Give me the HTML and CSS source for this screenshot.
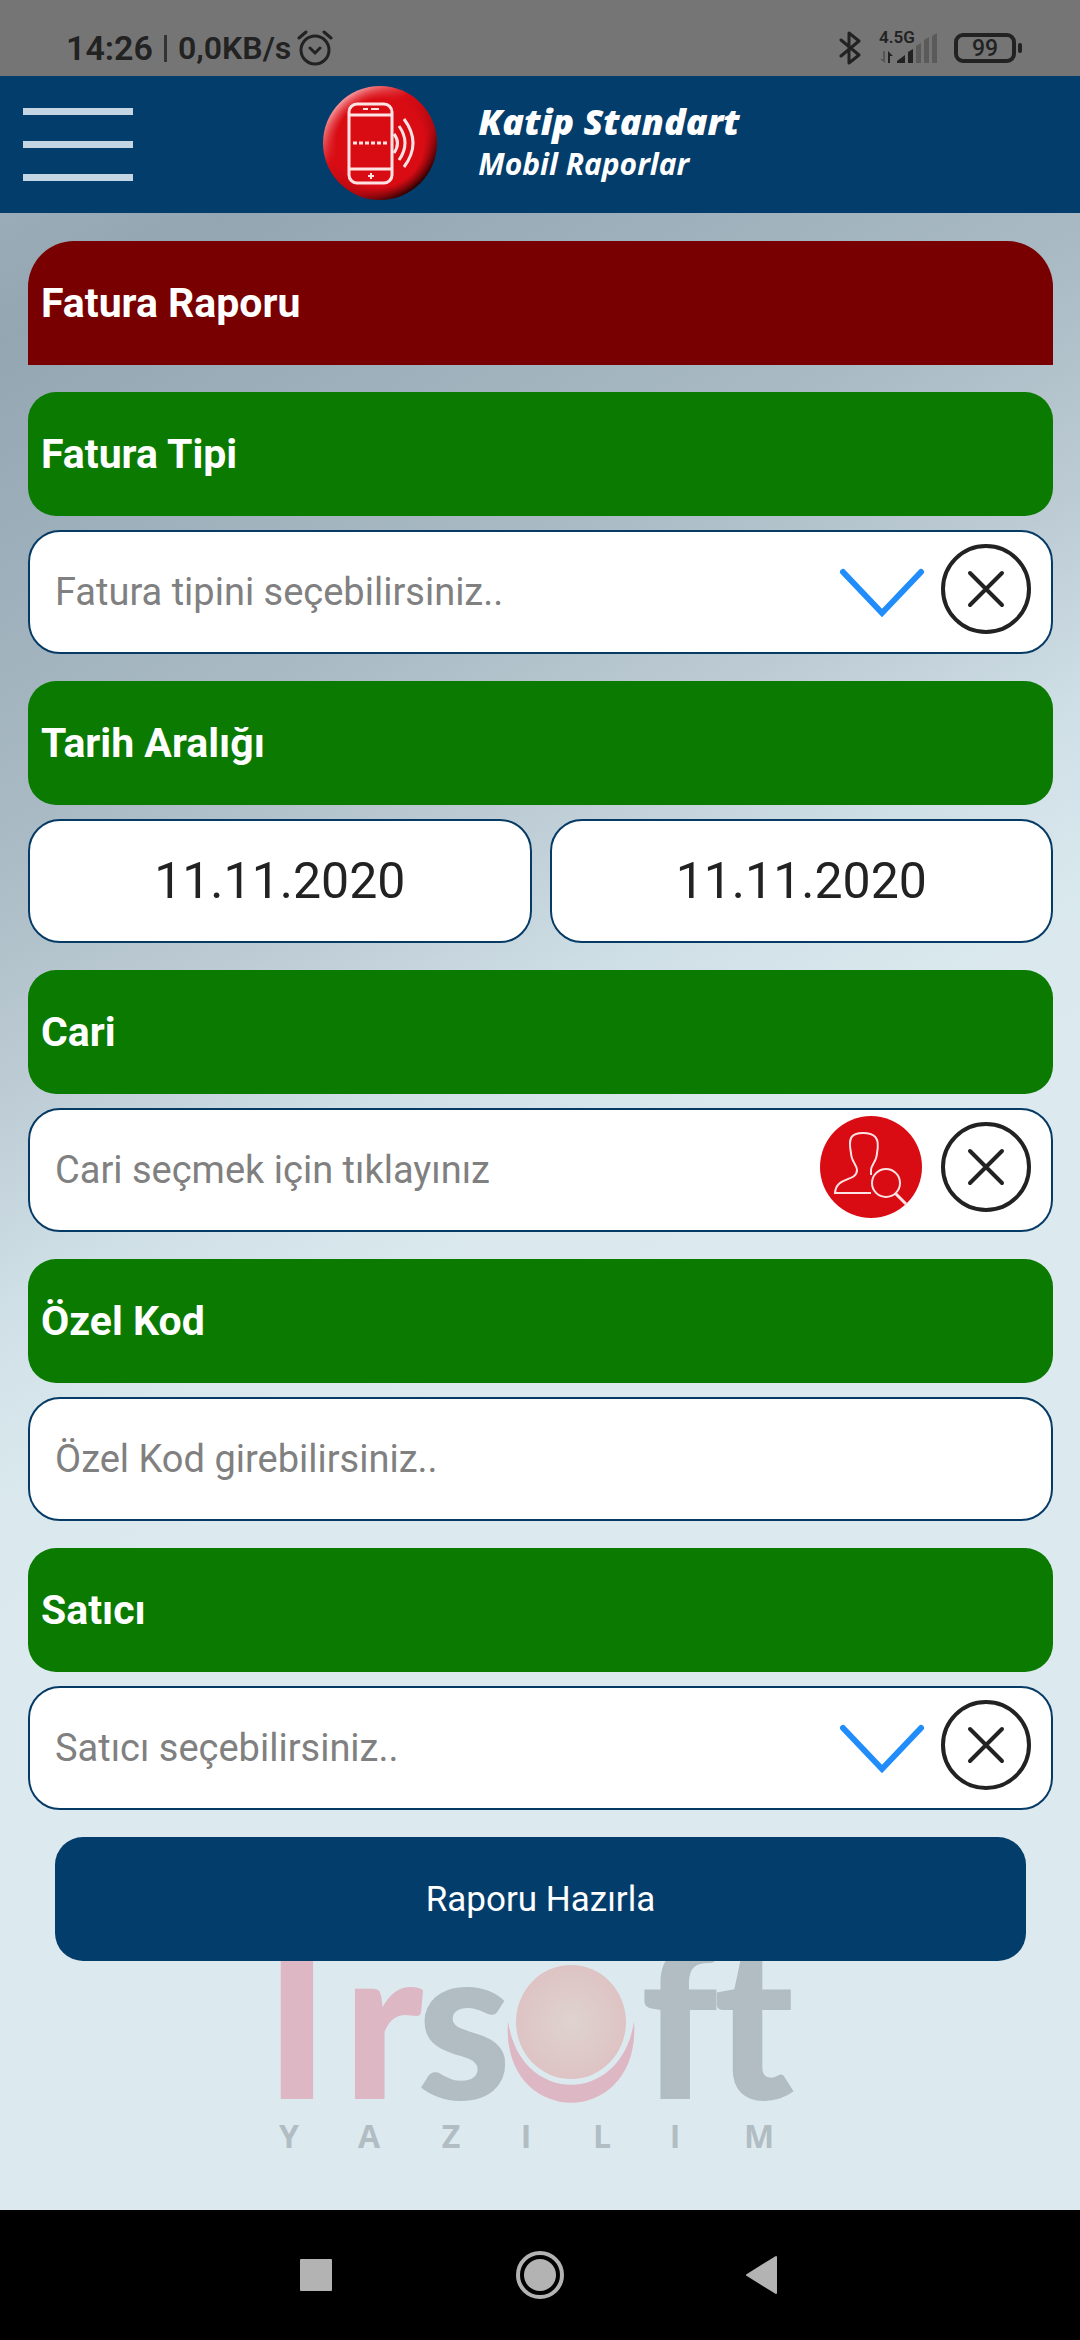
FILE: index.html
```
<!DOCTYPE html>
<html lang="tr">
<head>
  <meta charset="UTF-8">
  <meta name="viewport" content="width=device-width, initial-scale=1">
  <title>Katip Standart Mobil Raporlar</title>
  <link rel="stylesheet" href="styles.css">
</head>
<body>

<div class="status-bar">
  <div class="status-left">
    <span class="clock">14:26</span>
    <span class="divider"></span>
    <span class="speed">0,0KB/s</span>
    <svg class="alarm" viewBox="0 0 36 36" width="36" height="36" fill="none" stroke="#222" stroke-width="3" stroke-linecap="round">
      <circle cx="18" cy="20" r="14"/>
      <path d="M13 18l5 5 5-5M2 8l7-6M34 8l-7-6"/>
    </svg>
  </div>
  <div class="status-right">
    <svg viewBox="0 0 22 36" width="22" height="36" fill="none" stroke="#222" stroke-width="3" stroke-linejoin="round" stroke-linecap="round">
      <path d="M2 10l18 15-10 8V3l10 8L2 26"/>
    </svg>
    <div class="network">
      <span class="network-type">4.5G</span>
      <svg viewBox="0 0 60 32" width="60" height="32">
        <path d="M6 19v12l-5-4h3v-8z" fill="#555"/>
        <path d="M9 31V19l5 5h-3v7z" fill="#222"/>
        <path d="M18 31v-2l8-6v8zM29 31V20l5-3v14z" fill="#222"/>
        <path d="M37 31V14l5-3v20zM45 31V8l5-3v26zM53 31V4l5-3v30z" fill="#5a5a5a"/>
      </svg>
    </div>
    <div class="battery">99</div>
  </div>
</div>

<header class="top-bar">
  <button type="button" class="menu-button" aria-label="Menü">
    <span></span><span></span><span></span>
  </button>
  <div class="brand">
    <svg viewBox="0 0 116 116" width="116" height="116">
      <defs>
        <linearGradient id="rim" x1="0.15" y1="0.1" x2="0.85" y2="0.9">
          <stop offset="0" stop-color="#f7a0a4"/>
          <stop offset="0.35" stop-color="#d90c14"/>
          <stop offset="0.7" stop-color="#b00810"/>
          <stop offset="1" stop-color="#1c0000"/>
        </linearGradient>
        <radialGradient id="face">
          <stop offset="0.78" stop-color="#d90c14"/>
          <stop offset="1" stop-color="#d90c14" stop-opacity="0"/>
        </radialGradient>
      </defs>
      <circle cx="58" cy="58" r="57" fill="url(#rim)"/>
      <circle cx="58" cy="58" r="56" fill="url(#face)"/>
      <g fill="none" stroke="#ffe3e4" stroke-width="3">
        <rect x="27" y="19" width="43" height="79" rx="8"/>
        <path d="M27 30h43M27 84h43"/>
        <path d="M31 58h36" stroke-dasharray="4 2"/>
        <path d="M41 24h5M49 24h8M46 91h6M49 88v6" stroke-width="2"/>
        <path d="M72 49q7 9 0 19M77 41q12 17 0 34M82 34q18 24 0 48"/>
      </g>
    </svg>
    <div class="brand-text">
      <strong>Katip Standart</strong>
      <span>Mobil Raporlar</span>
    </div>
  </div>
</header>

<main>
  <form class="report-form">
    <h1>Fatura Raporu</h1>

    <div class="group">
      <label for="faturaTipi">Fatura Tipi</label>
      <div class="field">
        <input type="text" id="faturaTipi" placeholder="Fatura tipini seçebilirsiniz..">
        <div class="actions">
          <button type="button" class="icon-button" aria-label="Fatura tipi seç">
            <svg viewBox="0 0 100 100" width="100" height="100" fill="none" stroke="#218dfb" stroke-width="6" stroke-linecap="round">
              <path d="M13 33l39 41 39-41"/>
            </svg>
          </button>
          <button type="button" class="icon-button" aria-label="Temizle">
            <svg viewBox="0 0 100 100" width="100" height="100" fill="none" stroke="#222" stroke-width="4" stroke-linecap="round">
              <circle cx="50" cy="50" r="43"/>
              <path d="M34 34l32 32M66 34L34 66"/>
            </svg>
          </button>
        </div>
      </div>
    </div>

    <div class="group">
      <label for="tarihBas">Tarih Aralığı</label>
      <div class="dates">
        <div class="field"><input type="text" id="tarihBas" class="date" value="11.11.2020"></div>
        <div class="field"><input type="text" id="tarihBit" class="date" value="11.11.2020" aria-label="Bitiş tarihi"></div>
      </div>
    </div>

    <div class="group">
      <label for="cari">Cari</label>
      <div class="field">
        <input type="text" id="cari" placeholder="Cari seçmek için tıklayınız">
        <div class="actions">
          <button type="button" class="icon-button wide" aria-label="Cari ara">
            <svg viewBox="0 0 102 102" width="102" height="102" fill="none" stroke="#ffe3e4" stroke-width="2">
              <circle cx="51" cy="51" r="51" fill="#d90c14" stroke="none"/>
              <path d="M51 77H15C16 60 37 66 37 54C37 49 31 45 31 37C28 22 31 17 43 17S60 22 57 37C57 45 51 49 51 54V59"/>
              <circle cx="66" cy="67" r="14"/>
              <path d="M75 77l11 11" stroke-width="3"/>
            </svg>
          </button>
          <button type="button" class="icon-button" aria-label="Temizle">
            <svg viewBox="0 0 100 100" width="100" height="100" fill="none" stroke="#222" stroke-width="4" stroke-linecap="round">
              <circle cx="50" cy="50" r="43"/>
              <path d="M34 34l32 32M66 34L34 66"/>
            </svg>
          </button>
        </div>
      </div>
    </div>

    <div class="group">
      <label for="ozelKod">Özel Kod</label>
      <div class="field">
        <input type="text" id="ozelKod" placeholder="Özel Kod girebilirsiniz..">
      </div>
    </div>

    <div class="group">
      <label for="satici">Satıcı</label>
      <div class="field">
        <input type="text" id="satici" placeholder="Satıcı seçebilirsiniz..">
        <div class="actions">
          <button type="button" class="icon-button" aria-label="Satıcı seç">
            <svg viewBox="0 0 100 100" width="100" height="100" fill="none" stroke="#218dfb" stroke-width="6" stroke-linecap="round">
              <path d="M13 33l39 41 39-41"/>
            </svg>
          </button>
          <button type="button" class="icon-button" aria-label="Temizle">
            <svg viewBox="0 0 100 100" width="100" height="100" fill="none" stroke="#222" stroke-width="4" stroke-linecap="round">
              <circle cx="50" cy="50" r="43"/>
              <path d="M34 34l32 32M66 34L34 66"/>
            </svg>
          </button>
        </div>
      </div>
    </div>

    <button type="submit" class="submit">Raporu Hazırla</button>
  </form>

  <svg class="watermark" viewBox="0 0 540 200" width="540" height="200" role="img" aria-label="Irsoft Yazılım">
    <defs>
      <radialGradient id="ball">
        <stop offset="0" stop-color="#ded3d0"/>
        <stop offset="1" stop-color="#dec3c4"/>
      </radialGradient>
    </defs>
    <g class="watermark-name">
      <text class="pink" y="138" x="27 113">Ir</text>
      <text class="grey" y="138" x="194">s</text>
      <text class="grey" y="138" x="409 484">ft</text>
    </g>
    <path class="pink" d="M238 60C230 169 372 169 364 60C352 145 250 145 238 60z"/>
    <ellipse cx="301" cy="61" rx="55" ry="57" fill="url(#ball)"/>
    <text class="watermark-sub grey" y="187" x="19 99 181 256 332 405 489">YAZILIM</text>
  </svg>
</main>

<nav class="nav-bar">
  <button type="button" aria-label="Son uygulamalar">
    <svg viewBox="0 0 50 50" width="50" height="50" fill="#b3b3b3"><rect x="9" y="9" width="32" height="32" rx="1"/></svg>
  </button>
  <button type="button" aria-label="Ana ekran">
    <svg viewBox="0 0 50 50" width="50" height="50" fill="#b3b3b3">
      <circle cx="25" cy="25" r="16"/>
      <circle cx="25" cy="25" r="22" fill="none" stroke="#b3b3b3" stroke-width="4"/>
    </svg>
  </button>
  <button type="button" aria-label="Geri">
    <svg viewBox="0 0 50 50" width="50" height="50" fill="#b3b3b3" stroke="#b3b3b3" stroke-width="2" stroke-linejoin="round"><path d="M8 25l29-18v36z"/></svg>
  </button>
</nav>

</body>
</html>
```
FILE: styles.css
```
* {
  box-sizing: border-box;
}
body {
  margin: 0;
  min-height: 100vh;
  display: flex;
  flex-direction: column;
  font-family: Roboto, sans-serif;
}
button {
  border: 0;
  padding: 0;
  background: none;
  font-family: inherit;
  cursor: pointer;
}
svg {
  display: block;
}

/* status bar */
.status-bar {
  display: flex;
  justify-content: space-between;
  height: 76px;
  padding: 20px 64px 0 66px;
  background: #757575;
  color: #222;
}
.status-left, .status-right {
  display: flex;
  align-items: center;
  height: 56px;
}
.clock {
  font-size: 34px;
  font-weight: 600;
}
.divider {
  width: 3px;
  height: 27px;
  margin: 0 11px;
  background: #333;
}
.speed {
  font-size: 32px;
  font-weight: 600;
}
.alarm {
  margin-left: 6px;
}
.network {
  position: relative;
  margin: 0 15px 0 18px;
}
.network-type {
  position: absolute;
  left: 0;
  top: -5px;
  font-size: 17px;
  line-height: 20px;
  font-weight: 600;
}
.battery {
  position: relative;
  width: 62px;
  height: 30px;
  border: 4px solid #222;
  border-radius: 9px;
  font-size: 23px;
  line-height: 23px;
  font-weight: 500;
  text-align: center;
}
.battery::after {
  content: "";
  position: absolute;
  right: -10px;
  top: 6px;
  width: 4px;
  height: 10px;
  border-radius: 2px;
  background: #222;
}

/* header */
.top-bar {
  display: grid;
  grid-template-columns: 1fr auto 1fr;
  align-items: center;
  height: 137px;
  padding: 0 23px;
  background: #033d6c;
}
.menu-button {
  width: 110px;
  display: flex;
  flex-direction: column;
  gap: 26px;
}
.menu-button span {
  height: 7px;
  background: #c4d5e3;
}
.brand {
  display: flex;
  align-items: center;
  gap: 40px;
  padding: 0 18px 4px 0;
}
.brand-text {
  display: flex;
  flex-direction: column;
  font-family: "Open Sans", sans-serif;
  font-style: italic;
  font-weight: bold;
  color: #fff;
}
.brand-text strong {
  font-size: 36px;
  line-height: 42px;
}
.brand-text span {
  font-size: 30px;
  line-height: 42px;
}

/* form */
main {
  flex: 1;
  background: linear-gradient(151deg, #9aacb8 0%, #93a6b2 5%, #a9bac4 24%, #bdccd4 34%, #cfdfe6 42%, #d9e8ed 49%, #dceaef 55%);
}
.report-form {
  display: flex;
  flex-direction: column;
  gap: 27px;
  padding: 28px 27px 0 28px;
}
h1, label {
  display: block;
  margin: 0;
  padding: 0 13px;
  font-size: 41px;
  line-height: 124px;
  font-weight: bold;
  color: #fff;
}
h1 {
  background: #780000;
  border-radius: 46px 46px 0 0;
}
label {
  background: #0a7a00;
  border-radius: 28px;
}
.group {
  display: flex;
  flex-direction: column;
  gap: 14px;
}
.field {
  display: flex;
  height: 124px;
  background: #fff;
  border: 2px solid #063b66;
  border-radius: 32px;
}
.field input {
  flex: 1;
  min-width: 0;
  border: 0;
  outline: 0;
  padding: 0 25px;
  background: none;
  font-family: inherit;
  font-size: 38px;
  color: #222;
}
.field input::placeholder {
  color: #808080;
}
.field .date {
  font-size: 50px;
  text-align: center;
}
.dates {
  display: grid;
  grid-template-columns: repeat(2, minmax(0, 1fr));
  gap: 18px;
}
.actions {
  display: flex;
  align-items: center;
  gap: 6px;
  padding: 0 15px 6px 0;
}
.wide {
  margin-right: 8px;
}
.submit {
  margin: 0 27px;
  height: 124px;
  border-radius: 28px;
  background: #033d6c;
  color: #fff;
  font-size: 35px;
}
.watermark {
  margin: 0 auto;
}
.watermark-name {
  font-family: Lato, sans-serif;
  font-weight: 900;
  font-size: 214px;
  text-anchor: middle;
}
.watermark-sub {
  font-family: "Open Sans", sans-serif;
  font-weight: bold;
  font-size: 32px;
  text-anchor: middle;
}
.pink {
  fill: #deb7c4;
}
.grey {
  fill: #b1bdc3;
}

/* navigation bar */
.nav-bar {
  display: flex;
  justify-content: center;
  align-items: center;
  gap: 174px;
  height: 130px;
  background: #000;
}
```
